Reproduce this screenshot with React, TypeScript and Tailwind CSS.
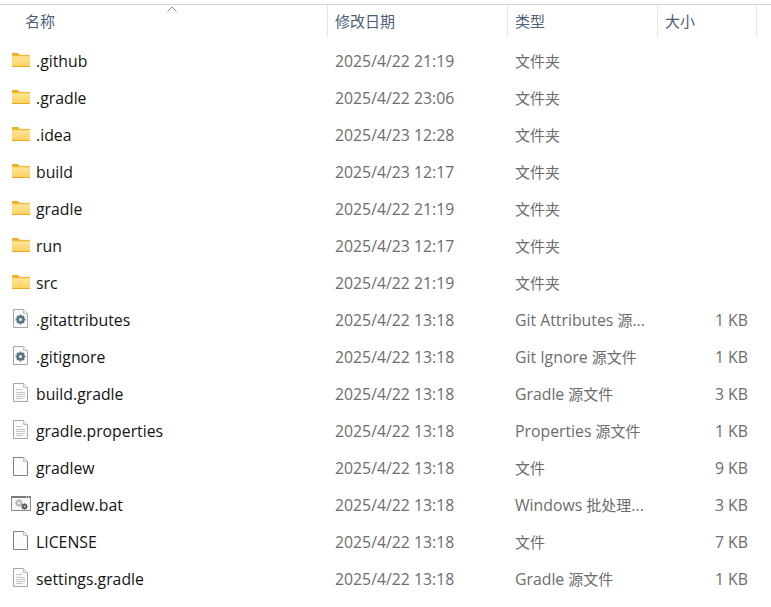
const font = "[font-family:'Open_Sans','Noto_Sans_CJK_SC',sans-serif]";

type IconKind = 'folder' | 'config' | 'text' | 'blank' | 'bat';

interface FileRow {
  name: string;
  date: string;
  type: string;
  size?: string;
  icon: IconKind;
}

const rows: FileRow[] = [
  { name: '.github', date: '2025/4/22 21:19', type: '文件夹', icon: 'folder' },
  { name: '.gradle', date: '2025/4/22 23:06', type: '文件夹', icon: 'folder' },
  { name: '.idea', date: '2025/4/23 12:28', type: '文件夹', icon: 'folder' },
  { name: 'build', date: '2025/4/23 12:17', type: '文件夹', icon: 'folder' },
  { name: 'gradle', date: '2025/4/22 21:19', type: '文件夹', icon: 'folder' },
  { name: 'run', date: '2025/4/23 12:17', type: '文件夹', icon: 'folder' },
  { name: 'src', date: '2025/4/22 21:19', type: '文件夹', icon: 'folder' },
  { name: '.gitattributes', date: '2025/4/22 13:18', type: 'Git Attributes 源...', size: '1 KB', icon: 'config' },
  { name: '.gitignore', date: '2025/4/22 13:18', type: 'Git Ignore 源文件', size: '1 KB', icon: 'config' },
  { name: 'build.gradle', date: '2025/4/22 13:18', type: 'Gradle 源文件', size: '3 KB', icon: 'text' },
  { name: 'gradle.properties', date: '2025/4/22 13:18', type: 'Properties 源文件', size: '1 KB', icon: 'text' },
  { name: 'gradlew', date: '2025/4/22 13:18', type: '文件', size: '9 KB', icon: 'blank' },
  { name: 'gradlew.bat', date: '2025/4/22 13:18', type: 'Windows 批处理...', size: '3 KB', icon: 'bat' },
  { name: 'LICENSE', date: '2025/4/22 13:18', type: '文件', size: '7 KB', icon: 'blank' },
  { name: 'settings.gradle', date: '2025/4/22 13:18', type: 'Gradle 源文件', size: '1 KB', icon: 'text' },
];

// latin runs are a bit wider than the CJK ones in the screenshot
function TypeLabel({ text }: { text: string }) {
  const parts = text.split(/([\u4e00-\u9fff]+)/);
  return (
    <>
      {parts.map((part, i) =>
        /[\u4e00-\u9fff]/.test(part) ? (
          <span key={i} className="text-[15px]">{part}</span>
        ) : (
          <span key={i}>{part}</span>
        ),
      )}
    </>
  );
}

function Gear({ cx, cy, r, color, hole }: { cx: number; cy: number; r: number; color: string; hole: string }) {
  const teeth = [0, 45, 90, 135];
  return (
    <g>
      {teeth.map((a) => (
        <rect
          key={a}
          x={cx - r * 0.32}
          y={cy - r * 1.35}
          width={r * 0.64}
          height={r * 2.7}
          fill={color}
          transform={`rotate(${a} ${cx} ${cy})`}
        />
      ))}
      <circle cx={cx} cy={cy} r={r} fill={color} />
      <circle cx={cx} cy={cy} r={r * 0.42} fill={hole} />
    </g>
  );
}

function Page({ lines, stroke }: { lines?: boolean; stroke: string }) {
  return (
    <>
      <path d="M0.5 0.5H10.5L14.5 4.5V18.5H0.5Z" fill="#fbfbfb" stroke={stroke} />
      <path d="M10.5 0.5V4.5H14.5" fill="#efefef" stroke="#c2c2c2" />
      {lines && (
        <path d="M3 6.5H9M3 9.5H12M3 11.5H12M3 13.5H12M3 15.5H10" stroke="#c6c6c6" fill="none" />
      )}
    </>
  );
}

function FileIcon({ kind }: { kind: IconKind }) {
  if (kind === 'folder') {
    return (
      <svg width="18" height="14" viewBox="0 0 18 15" preserveAspectRatio="none" className="mb-0.5 ml-3">
        <defs>
          <linearGradient id="folderBody" x1="0" y1="0" x2="0" y2="1">
            <stop offset="0" stopColor="#ffe596" />
            <stop offset="1" stopColor="#fdd263" />
          </linearGradient>
        </defs>
        <path d="M0 1a1 1 0 0 1 1-1h5l2 2.5H0Z" fill="#efad1e" />
        <rect x="0" y="2" width="18" height="13" fill="#f2b93a" />
        <rect x="0" y="3.5" width="18" height="10.5" fill="url(#folderBody)" />
        <rect x="0" y="14" width="18" height="1" fill="#e9aa22" />
      </svg>
    );
  }
  if (kind === 'bat') {
    return (
      <svg width="20" height="15" viewBox="0 0 20 15" className="mb-0.5 ml-[11px]">
        <rect x="0.5" y="0.5" width="19" height="14" fill="#f7f7f7" stroke="#8c8c8c" />
        <rect x="0" y="0" width="20" height="2" fill="#7c7c7c" />
        <rect x="15" y="0.5" width="1" height="1" fill="#e8e8e8" />
        <rect x="17" y="0.5" width="1" height="1" fill="#e8e8e8" />
        <Gear cx={8} cy={7} r={2.8} color="#b4babf" hole="#f0f0f0" />
        <Gear cx={13.5} cy={10.5} r={2.3} color="#46525a" hole="#dcdcdc" />
      </svg>
    );
  }
  return (
    <svg width="15" height="19" viewBox="0 0 15 19" className="mb-0.5 ml-[13px]">
      <Page lines={kind === 'text'} stroke={kind === 'blank' ? '#7f7f7f' : '#a6a6a6'} />
      {kind === 'config' && <Gear cx={7.5} cy={10.5} r={3.6} color="#587382" hole="#f2f4f5" />}
    </svg>
  );
}

export default function App() {
  return (
    <div className={`${font} h-[607px] w-[771px] overflow-hidden bg-white pt-1 text-[15.8px] leading-5`}>
      <div className="relative grid h-[33px] grid-cols-[327px_180px_150px_100px] border-t border-[#e5cfd0] text-[15px] text-[#4c607a]">
        <svg width="10" height="6" viewBox="0 0 10 6" className="absolute left-[167px] top-px">
          <path d="M0.5 5.5L5 1L9.5 5.5" fill="none" stroke="#8a8a8a" />
        </svg>
        <div className="flex items-center pl-[25px]">名称</div>
        <div className="flex items-center border-l border-[#e5e5e5] pl-[7px]">修改日期</div>
        <div className="flex items-center border-l border-[#e5e5e5] pl-[7px]">类型</div>
        <div className="flex items-center border-x border-[#e5e5e5] pl-[7px]">大小</div>
      </div>
      <div className="pt-[5px]">
        {rows.map((row) => (
          <div key={row.name} className="grid h-[37px] grid-cols-[327px_180px_150px_100px] items-center">
            <div className="flex h-5 items-center">
              <div className="flex w-9 shrink-0 items-center">
                <FileIcon kind={row.icon} />
              </div>
              <span className="text-[#141414]">{row.name}</span>
            </div>
            <div className="pl-2 text-[#6d6d6d]">{row.date}</div>
            <div className="pl-2 text-[#6d6d6d]">
              <TypeLabel text={row.type} />
            </div>
            <div className="pr-[9px] text-right text-[#6d6d6d]">{row.size}</div>
          </div>
        ))}
      </div>
    </div>
  );
}
